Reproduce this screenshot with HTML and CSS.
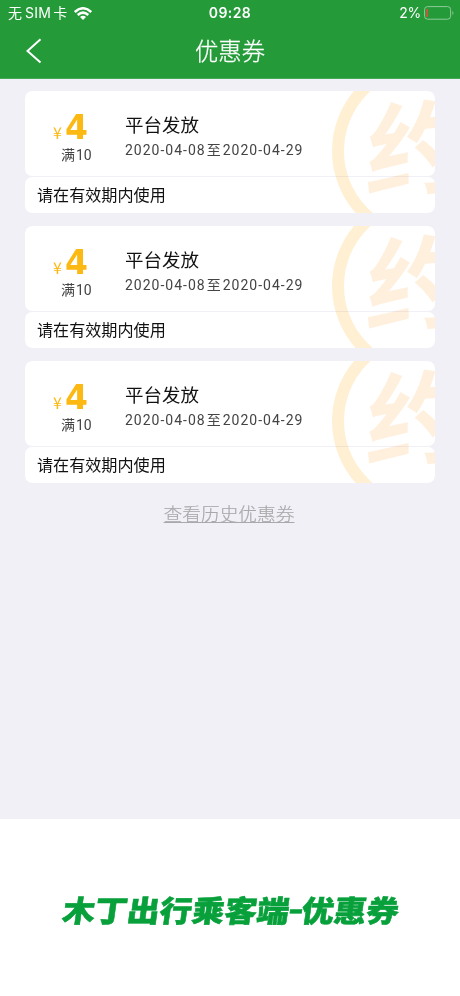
FILE: index.html
```html
<!DOCTYPE html>
<html lang="zh-CN">
<head>
<meta charset="utf-8">
<title>优惠券</title>
<link rel="stylesheet" href="styles.css">
</head>
<body>
<header class="header">
  <div class="status">
    <div class="carrier"><span>无</span><span class="sim">SIM</span><span>卡</span>
      <svg class="wifi" width="18" height="13" viewBox="0 0 18 13"><g fill="none" stroke="#fff" stroke-width="2.5"><path d="M.8 5Q9-2.5 17.2 5"/><path d="M3.7 8Q9 3.2 14.3 8"/></g><path d="M6 10Q9 7.5 12 10L9 13Z" fill="#fff"/></svg>
    </div>
    <div class="time">09:28</div>
    <div class="power"><span>2%</span>
      <svg width="30" height="14" viewBox="0 0 30 14"><rect x=".6" y=".6" width="26" height="12.6" rx="3" fill="none" stroke="#8fcb98" stroke-width="1"/><rect x="2.2" y="2.7" width="2" height="8.3" rx=".8" fill="#c65b3b"/><path d="M28.4 5v4q1-.5 1-2t-1-2" fill="#8fcb98"/></svg>
    </div>
  </div>
  <div class="nav">
    <svg class="back" width="16" height="26" viewBox="0 0 16 26"><path d="M14.5 1.2L1.5 13L14.5 24.5" fill="none" stroke="#fff" stroke-width="2"/></svg>
    <h1>优惠券</h1>
  </div>
</header>
<main class="content">
  <article class="coupon">
    <div class="mark"><span>约</span></div>
    <div class="top">
      <div class="value"><div class="price"><span>¥</span><b>4</b></div><div class="limit">满<span>10</span></div></div>
      <div class="info"><h2>平台发放</h2><p>2020-04-08<span>至</span>2020-04-29</p></div>
    </div>
    <div class="rule">请在有效期内使用</div>
  </article>
  <article class="coupon">
    <div class="mark"><span>约</span></div>
    <div class="top">
      <div class="value"><div class="price"><span>¥</span><b>4</b></div><div class="limit">满<span>10</span></div></div>
      <div class="info"><h2>平台发放</h2><p>2020-04-08<span>至</span>2020-04-29</p></div>
    </div>
    <div class="rule">请在有效期内使用</div>
  </article>
  <article class="coupon">
    <div class="mark"><span>约</span></div>
    <div class="top">
      <div class="value"><div class="price"><span>¥</span><b>4</b></div><div class="limit">满<span>10</span></div></div>
      <div class="info"><h2>平台发放</h2><p>2020-04-08<span>至</span>2020-04-29</p></div>
    </div>
    <div class="rule">请在有效期内使用</div>
  </article>
  <a class="history">查看历史优惠券</a>
</main>
<footer class="caption"><span>木丁出行乘客端<i>-</i>优惠券</span></footer>
</body>
</html>
```
FILE: styles.css
```css
* { box-sizing: border-box; }
body { margin: 0; width: 460px; height: 996px; overflow: hidden; background: #fff; color: #111; font-family: Inter, "Noto Sans CJK SC", sans-serif; }
h1, h2, p { margin: 0; font-weight: 400; }
.header { height: 79px; background: #249a39; color: #fff; border-bottom: 1px solid #43a957; }
.status { display: grid; grid-template-columns: 1fr 60px 1fr; height: 26px; align-items: center; font-size: 13px; line-height: 20px; }
.carrier { display: flex; align-items: center; padding-left: 8px; font-size: 14px; }
.sim { margin: 0 2px 0 3px; letter-spacing: .3px; }
.wifi { margin-left: 7px; }
.time { text-align: center; font-weight: 600; letter-spacing: .4px; font-size: 14px; }
.power { display: flex; justify-content: flex-end; align-items: center; gap: 3px; padding-right: 6px; font-size: 14px; letter-spacing: -.3px; }
.nav { display: grid; grid-template-columns: 60px 1fr 60px; height: 50px; align-items: center; }
.back { margin-left: 26px; }
.nav h1 { padding-top: 1px; font-size: 23.3px; line-height: 34px; text-align: center; font-weight: 300; -webkit-text-stroke: .3px #fff; }
.content { height: 740px; padding: 12px 25px 0; background: #f1f0f7; }
.coupon { position: relative; height: 122px; margin-bottom: 13px; overflow: hidden; border-radius: 7px; }
.top { display: flex; height: 85px; background: #fff; border-radius: 7px; }
.rule { height: 36px; margin-top: 1px; padding-left: 12px; background: #fff; border-radius: 7px; font-size: 16.1px; line-height: 36px; }
.mark { position: absolute; z-index: 1; left: 307px; top: -33px; width: 186px; height: 186px; border: 12px solid #fff0d4; border-radius: 50%; mix-blend-mode: multiply; }
.mark span { position: absolute; left: 23px; top: 12px; font: 700 101px/120px "Noto Sans CJK SC", sans-serif; color: #fff0de; transform: rotate(-4deg) skewX(-7deg); }
.value { width: 100px; padding-top: 19px; }
.price { display: flex; align-items: baseline; height: 36px; padding-left: 26px; color: #fdb913; line-height: 36px; }
.price span { width: 14px; font: 400 16px/30px "Noto Sans CJK SC", sans-serif; text-indent: 2px; }
.price b { font: 700 33px/36px "DejaVu Sans", sans-serif; }
.limit { margin-top: -1px; padding-left: 36px; font-size: 14px; line-height: 20px; color: #444; }
.limit span { margin-left: 1px; font: 14px/20px Roboto, sans-serif; }
.info { padding-top: 21px; }
.info h2 { font-size: 18.5px; line-height: 26px; }
.info p { margin-top: 2px; font: 14px/20px Roboto, "Noto Sans CJK SC", sans-serif; color: #444; letter-spacing: 1px; white-space: nowrap; }
.info p span { margin: 0 2px 0 1px; letter-spacing: 0; }
.history { display: block; width: max-content; margin: 17px auto 0; position: relative; left: -1px; font-size: 18.7px; line-height: 30px; color: #a9a9ab; font-weight: 300; -webkit-text-stroke: .2px #a9a9ab; text-decoration: underline; text-decoration-thickness: 1px; text-underline-offset: 1px; }
.caption { display: flex; height: 177px; justify-content: center; align-items: center; color: #08a03b; }
.caption span { font: 900 32.4px/40px "Noto Sans CJK SC", sans-serif; white-space: nowrap; transform: translate(1px, 1px) skewX(-8deg) scaleY(.92); -webkit-text-stroke: .6px #08a03b; }
.caption i { display: inline-block; font-style: normal; transform: scaleX(1.25) translateY(-2px); }
```
